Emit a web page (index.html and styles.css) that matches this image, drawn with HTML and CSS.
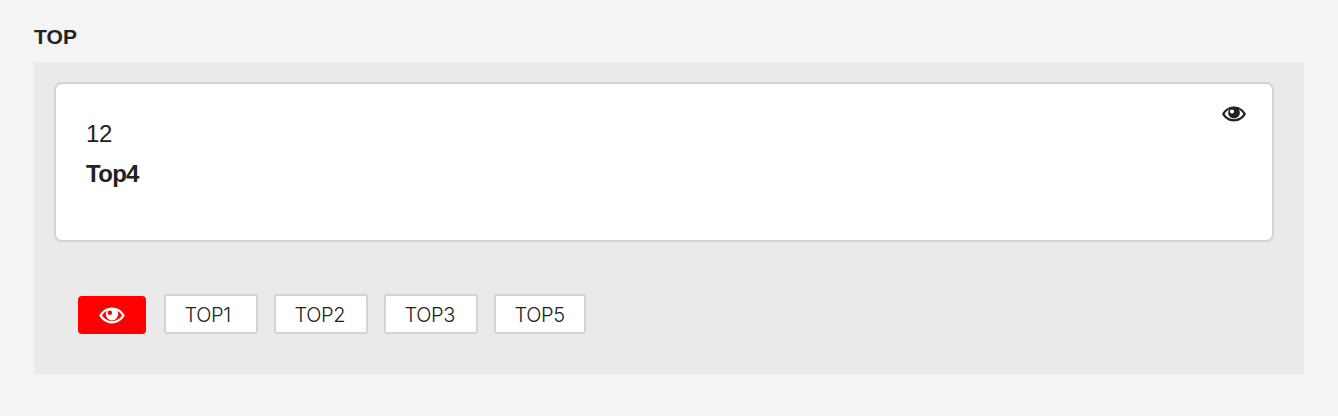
FILE: index.html
```html
<!DOCTYPE html>
<html lang="en">
<head>
<meta charset="utf-8">
<title>TOP</title>
<link rel="stylesheet" href="styles.css">
</head>
<body>
<svg class="defs" aria-hidden="true">
  <symbol id="eye" viewBox="0 0 24 16">
    <path fill="currentColor" fill-rule="evenodd" d="M12 .5C6.500.5 2.200 3.900 0 8c2.200 4.100 6.500 7.500 12 7.500S21.800 12.100 24 8C21.800 3.900 17.500.5 12 .5ZM12 2.300c4 0 7.500 2.300 9.400 5.700-2 3.200-5.400 5.200-9.400 5.200S4.600 11.200 2.600 8c1.900-3.400 5.400-5.700 9.400-5.700Z"/>
    <path fill="currentColor" fill-rule="evenodd" d="M12 .8a5.900 5.900 0 1 0 0 11.800 5.900 5.900 0 0 0 0-11.800ZM10 3.400a2.100 2.100 0 1 1 0 4.200 2.100 2.100 0 0 1 0-4.200Z"/>
  </symbol>
</svg>
<main class="page">
  <h1 class="title">TOP</h1>
  <section class="panel">
    <article class="card">
      <div class="card-text">
        <p class="number">12</p>
        <p class="name">Top4</p>
      </div>
      <svg class="eye eye-card"><use href="#eye"/></svg>
    </article>
    <div class="actions">
      <button class="view" aria-label="Show"><svg class="eye eye-view"><use href="#eye"/></svg></button>
      <button class="option">TOP1</button>
      <button class="option">TOP2</button>
      <button class="option">TOP3</button>
      <button class="option option-last">TOP5</button>
    </div>
  </section>
</main>
</body>
</html>
```
FILE: styles.css
```css
* { box-sizing: border-box; }
body {
  margin: 0;
  background: #f4f4f4;
  color: #222;
  font-family: "Liberation Sans", Arial, sans-serif;
}
.defs { display: none; }
.page { padding: 25px 34px 42px; }
.title {
  margin: 0 0 13px;
  font-size: 21px;
  line-height: 24px;
  letter-spacing: 0.1px;
}
.panel {
  height: 312px;
  padding: 20px 30px 0 20px;
  background: #eaeaea;
}
.card {
  display: flex;
  justify-content: space-between;
  height: 160px;
  padding: 30px 26px 0 30px;
  border: 2px solid #d4d4d4;
  border-radius: 8px;
  background: #fff;
}
.card-text { font-size: 24px; line-height: 40px; }
.number, .name { margin: 0; }
.number { letter-spacing: -0.3px; }
.name { font-weight: bold; letter-spacing: -0.7px; }
.eye { display: block; width: 24px; height: 16px; }
.eye-card { margin-top: -8px; }
.actions {
  display: flex;
  align-items: flex-end;
  gap: 16px;
  padding: 52px 0 0 24px;
}
.view {
  display: flex;
  align-items: center;
  justify-content: center;
  width: 68px;
  height: 38px;
  margin-right: 2px;
  padding: 0;
  border: 0;
  border-radius: 4px;
  background: #f00;
  color: #fff;
}
.eye-view { width: 26px; height: 17px; }
.option {
  width: 94px;
  height: 40px;
  padding: 2px 0 0 18.5px;
  border: 2px solid #d4d4d4;
  border-radius: 3px;
  background: #fff;
  color: #222;
  font: 300 20px/34px Inter, "Liberation Sans", sans-serif;
  letter-spacing: -0.4px;
  text-align: left;
}
.option-last { width: 92px; }
```
